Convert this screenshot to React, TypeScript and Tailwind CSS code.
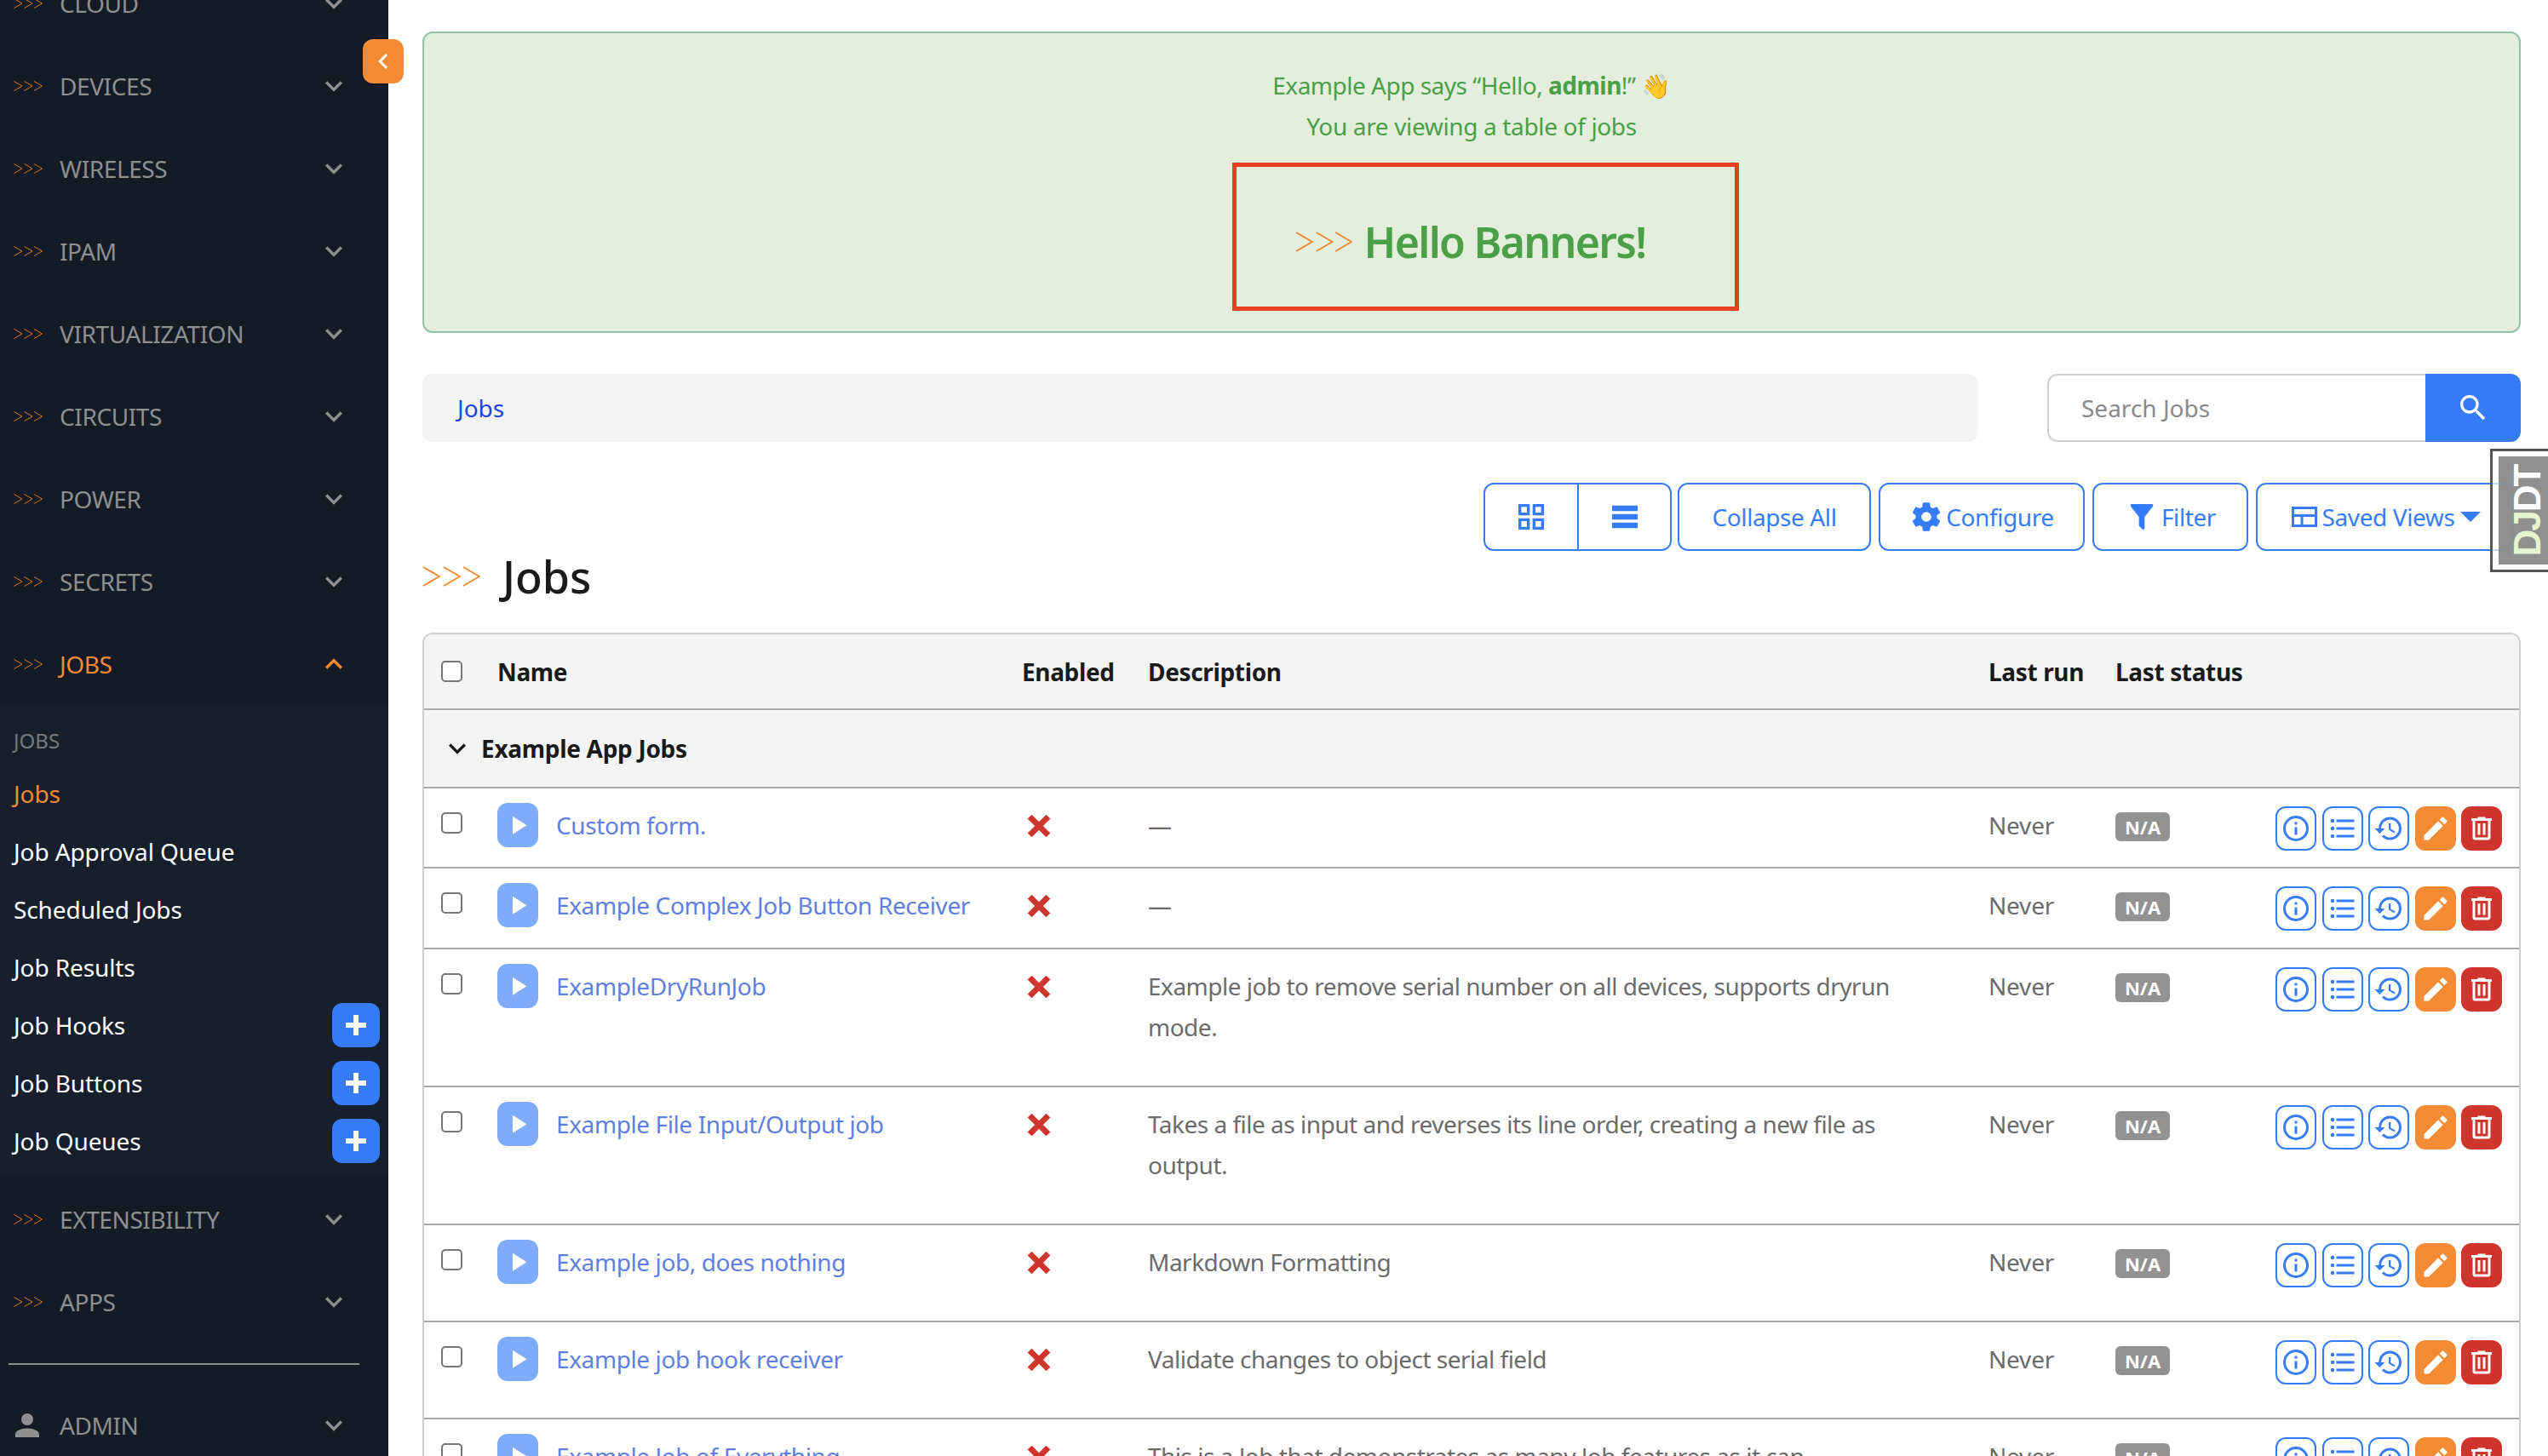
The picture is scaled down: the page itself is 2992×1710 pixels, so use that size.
import type { ReactNode } from "react";

const icons = {
  info: "M11,9H13V7H11M12,20C7.59,20 4,16.41 4,12C4,7.59 7.59,4 12,4C16.41,4 20,7.59 20,12C20,16.41 16.41,20 12,20M12,2A10,10 0 0,0 2,12A10,10 0 0,0 12,22A10,10 0 0,0 22,12A10,10 0 0,0 12,2M11,17H13V11H11V17Z",
  list: "M7,5H21V7H7V5M7,13V11H21V13H7M4,4.5A1.5,1.5 0 0,1 5.5,6A1.5,1.5 0 0,1 4,7.5A1.5,1.5 0 0,1 2.5,6A1.5,1.5 0 0,1 4,4.5M4,10.5A1.5,1.5 0 0,1 5.5,12A1.5,1.5 0 0,1 4,13.5A1.5,1.5 0 0,1 2.5,12A1.5,1.5 0 0,1 4,10.5M7,19V17H21V19H7M4,16.5A1.5,1.5 0 0,1 5.5,18A1.5,1.5 0 0,1 4,19.5A1.5,1.5 0 0,1 2.5,18A1.5,1.5 0 0,1 4,16.5Z",
  history: "M13.5,8H12V13L16.28,15.54L17,14.33L13.5,12.25V8M13,3A9,9 0 0,0 4,12H1L4.96,16.03L9,12H6A7,7 0 0,1 13,5A7,7 0 0,1 20,12A7,7 0 0,1 13,19C11.07,19 9.32,18.21 8.06,16.94L6.64,18.36C8.27,20 10.5,21 13,21A9,9 0 0,0 22,12A9,9 0 0,0 13,3",
  pencil: "M20.71,7.04C21.1,6.65 21.1,6 20.71,5.63L18.37,3.29C18,2.9 17.35,2.9 16.96,3.29L15.12,5.12L18.87,8.87M3,17.25V21H6.75L17.81,9.93L14.06,6.18L3,17.25Z",
  trash: "M9,3V4H4V6H5V19A2,2 0 0,0 7,21H17A2,2 0 0,0 19,19V6H20V4H15V3H9M7,6H17V19H7V6M9,8V17H11V8H9M13,8V17H15V8H13Z",
  grid: "M3,11H11V3H3M5,5H9V9H5M13,21H21V13H13M15,15H19V19H15M3,21H11V13H3M5,15H9V19H5M13,3V11H21V3M19,9H15V5H19Z",
  rows: "M3 4H21V8H3V4M3 10H21V14H3V10M3 16H21V20H3V16Z",
  cog: "M12,15.5A3.5,3.5 0 0,1 8.5,12A3.5,3.5 0 0,1 12,8.5A3.5,3.5 0 0,1 15.5,12A3.5,3.5 0 0,1 12,15.5M19.43,12.97C19.47,12.65 19.5,12.33 19.5,12C19.5,11.67 19.47,11.34 19.43,11L21.54,9.37C21.73,9.22 21.78,8.95 21.66,8.73L19.66,5.27C19.54,5.05 19.27,4.96 19.05,5.05L16.56,6.05C16.04,5.66 15.5,5.32 14.87,5.07L14.5,2.42C14.46,2.18 14.25,2 14,2H10C9.75,2 9.54,2.18 9.5,2.42L9.13,5.07C8.5,5.32 7.96,5.66 7.44,6.05L4.95,5.05C4.73,4.96 4.46,5.05 4.34,5.27L2.34,8.73C2.21,8.95 2.27,9.22 2.46,9.37L4.57,11C4.53,11.34 4.5,11.67 4.5,12C4.5,12.33 4.53,12.65 4.57,12.97L2.46,14.63C2.27,14.78 2.21,15.05 2.34,15.27L4.34,18.73C4.46,18.95 4.73,19.03 4.95,18.95L7.44,17.94C7.96,18.34 8.5,18.68 9.13,18.93L9.5,21.58C9.54,21.82 9.75,22 10,22H14C14.25,22 14.46,21.82 14.5,21.58L14.87,18.93C15.5,18.67 16.04,18.34 16.56,17.94L19.05,18.95C19.27,19.03 19.54,18.95 19.66,18.73L21.66,15.27C21.78,15.05 21.73,14.78 21.54,14.63L19.43,12.97Z",
  filter: "M14,12V19.88C14.04,20.18 13.94,20.5 13.71,20.71C13.32,21.1 12.69,21.1 12.3,20.71L10.29,18.7C10.06,18.47 9.96,18.16 10,17.87V12H9.97L4.21,4.62C3.87,4.19 3.95,3.56 4.38,3.22C4.57,3.08 4.78,3 5,3V3H19V3C19.22,3 19.43,3.08 19.62,3.22C20.05,3.56 20.13,4.19 19.79,4.62L14.03,12H14Z",
  table: "M2,4H22V20H2V4M4,6V10H20V6H4M4,12V18H9V12H4M11,12V18H20V12H11Z",
  magnify: "M9.5,3A6.5,6.5 0 0,1 16,9.5C16,11.11 15.41,12.59 14.44,13.73L14.71,14H15.5L20.5,19L19,20.5L14,15.5V14.71L13.73,14.44C12.59,15.41 11.11,16 9.5,16A6.5,6.5 0 0,1 3,9.5A6.5,6.5 0 0,1 9.5,3M9.5,5C7,5 5,7 5,9.5C5,12 7,14 9.5,14C12,14 14,12 14,9.5C14,7 12,5 9.5,5Z",
  account: "M12,4A4,4 0 0,1 16,8A4,4 0 0,1 12,12A4,4 0 0,1 8,8A4,4 0 0,1 12,4M12,14C16.42,14 20,15.79 20,18V20H4V18C4,15.79 7.58,14 12,14Z",
  play: "M8,5.14V19.14L19,12.14L8,5.14Z",
  plus: "M20 14H14V20H10V14H4V10H10V4H14V10H20V14Z",
  close: "M20 6.91L17.09 4L12 9.09L6.91 4L4 6.91L9.09 12L4 17.09L6.91 20L12 14.91L17.09 20L20 17.09L14.91 12L20 6.91Z",
  down: "M7.41,8.58L12,13.17L16.59,8.58L18,10L12,16L6,10L7.41,8.58Z",
  up: "M7.41,15.41L12,10.83L16.59,15.41L18,14L12,8L6,14L7.41,15.41Z",
  left: "M15.41,16.58L10.83,12L15.41,7.41L14,6L8,12L14,18L15.41,16.58Z",
};

const Icon = ({ name, className }: { name: keyof typeof icons; className: string }) => (
  <svg viewBox="0 0 24 24" fill="currentColor" className={className}>
    <path d={icons[name]} />
  </svg>
);

const Chevrons = ({ className }: { className: string }) => (
  <svg viewBox="0 0 68 24" fill="none" stroke="currentColor" strokeWidth="2" preserveAspectRatio="none" className={className}>
    <path d="M1 1L20 12L1 23M25 1L44 12L25 23M48 1L67 12L48 23" />
  </svg>
);

const NavItem = ({ label, open }: { label: string; open?: boolean }) => (
  <div className="flex items-center h-[97px]">
    <Chevrons className="w-[34px] h-[12px] ml-4 text-[#d97a26]" />
    <span className={`ml-[20px] flex-1 text-[28px] tracking-[-0.4px] ${open ? "text-[#f28b33]" : "text-[#8f8f8f]"}`}>{label}</span>
    <Icon name={open ? "up" : "down"} className={`w-10 h-10 mr-[44px] ${open ? "text-[#f28b33]" : "text-[#8f8f8f]"}`} />
  </div>
);

const SubItem = ({ label, active, add }: { label: string; active?: boolean; add?: boolean }) => (
  <div className="flex items-center justify-between h-[68px] pl-4 pr-[10px]">
    <span className={`text-[28px] tracking-[-0.1px] ${active ? "text-[#f28b33]" : "text-white"}`}>{label}</span>
    {add && (
      <span className="flex items-center justify-center w-[56px] h-[52px] rounded-xl bg-[#367cf7] text-white">
        <Icon name="plus" className="w-9 h-9" />
      </span>
    )}
  </div>
);

const Sidebar = () => (
  <aside className="relative w-[456px] shrink-0 -mt-[45px] mb-[-100px] bg-[#141b26]">
    {["CLOUD", "DEVICES", "WIRELESS", "IPAM", "VIRTUALIZATION", "CIRCUITS", "POWER", "SECRETS"].map((label) => (
      <NavItem key={label} label={label} />
    ))}
    <NavItem label="JOBS" open />
    <div className="bg-[#171f2c] h-[555px] pt-[14px]">
      <div className="h-[56px] pl-4 flex items-center text-[24px] text-[#77797e]">JOBS</div>
      <SubItem label="Jobs" active />
      <SubItem label="Job Approval Queue" />
      <SubItem label="Scheduled Jobs" />
      <SubItem label="Job Results" />
      <SubItem label="Job Hooks" add />
      <SubItem label="Job Buttons" add />
      <SubItem label="Job Queues" add />
    </div>
    <NavItem label="EXTENSIBILITY" />
    <NavItem label="APPS" />
    <div className="mt-[24px] ml-[10px] w-[412px] h-[2px] bg-[#8f8f8f]" />
    <div className="flex items-center h-[97px] mt-[22px]">
      <Icon name="account" className="w-[42px] h-[42px] ml-[11px] text-[#8f8f8f]" />
      <span className="ml-[17px] flex-1 text-[28px] tracking-[-0.4px] text-[#8f8f8f]">ADMIN</span>
      <Icon name="down" className="w-10 h-10 mr-[44px] text-[#8f8f8f]" />
    </div>
  </aside>
);

const Banner = () => (
  <div className="flex flex-col items-center h-[354px] pt-[37px] rounded-xl border-2 border-[#93c3a5] bg-[#e3efdc] text-[#4a9f47] tracking-[-0.35px]">
    <p className="leading-[48px] tracking-[-0.5px]">
      Example App says “Hello, <b className="font-bold">admin</b>!” 👋
    </p>
    <p className="leading-[48px]">You are viewing a table of jobs</p>
    <div className="flex items-center justify-center gap-[14px] mt-[19px] ml-[33px] pr-[36px] pt-[12px] w-[595px] h-[174px] border-[5px] border-[#e8401f]">
      <Chevrons className="w-[67px] h-[24px] text-[#f28b33]" />
      <span className="text-[50px] font-semibold tracking-[-1.7px]">Hello Banners!</span>
    </div>
  </div>
);

const SearchRow = () => (
  <div className="flex justify-between mt-[48px] h-[80px]">
    <div className="flex items-center w-[1827px] pl-[41px] rounded-xl bg-[#f4f4f4] text-[#1f45e0]">Jobs</div>
    <div className="flex w-[556px]">
      <div className="flex-1 flex items-center pl-[38px] rounded-l-xl border-2 border-r-0 border-[#cfcfcf] text-[#8a8a8a]">Search Jobs</div>
      <div className="flex items-center justify-center w-[112px] rounded-r-xl bg-[#367cf7] text-white">
        <Icon name="magnify" className="w-10 h-10" />
      </div>
    </div>
  </div>
);

const ToolButton = ({ w, children }: { w: string; children: ReactNode }) => (
  <div className={`flex items-center justify-center gap-[3px] h-[80px] rounded-xl border-2 border-[#367cf7] text-[#367cf7] tracking-[-0.4px] ${w}`}>{children}</div>
);

const Toolbar = () => (
  <div className="flex justify-end gap-[9px] mt-[48px] pr-[8px] h-[80px]">
    <div className="flex h-[80px] w-[221px] -mr-[2px] rounded-xl border-2 border-[#367cf7] text-[#367cf7]">
      <div className="flex items-center justify-center w-[110px] border-r-2 border-[#367cf7]">
        <Icon name="grid" className="w-10 h-10" />
      </div>
      <div className="flex items-center justify-center flex-1">
        <Icon name="rows" className="w-10 h-10" />
      </div>
    </div>
    <ToolButton w="w-[227px]">Collapse All</ToolButton>
    <ToolButton w="w-[242px]">
      <Icon name="cog" className="w-10 h-10" />
      Configure
    </ToolButton>
    <ToolButton w="w-[183px]">
      <Icon name="filter" className="w-10 h-10" />
      Filter
    </ToolButton>
    <ToolButton w="w-[303px]">
      <Icon name="table" className="w-9 h-9" />
      Saved Views
      <svg viewBox="0 0 24 12" fill="currentColor" className="ml-[4px] w-6 h-3">
        <path d="M0 0H24L12 12Z" />
      </svg>
    </ToolButton>
  </div>
);

const RowAction = ({ name, solid }: { name: keyof typeof icons; solid?: string }) => (
  <span className={`flex items-center justify-center w-[48px] h-[52px] rounded-xl ${solid ?? "border-2 border-[#367cf7] text-[#367cf7]"}`}>
    <Icon name={name} className="w-9 h-9" />
  </span>
);

const rows = [
  { name: "Custom form.", desc: "—", h: "h-[94px]" },
  { name: "Example Complex Job Button Receiver", desc: "—", h: "h-[95px]" },
  { name: "ExampleDryRunJob", desc: "Example job to remove serial number on all devices, supports dryrun mode.", h: "h-[162px]" },
  { name: "Example File Input/Output job", desc: "Takes a file as input and reverses its line order, creating a new file as output.", h: "h-[162px]" },
  { name: "Example job, does nothing", desc: "Markdown Formatting", h: "h-[114px]" },
  { name: "Example job hook receiver", desc: "Validate changes to object serial field", h: "h-[114px]" },
  { name: "Example Job of Everything", desc: "This is a Job that demonstrates as many Job features as it can.", h: "h-[114px]" },
];

const Checkbox = () => <span className="block w-[25px] h-[25px] rounded-[5px] border-2 border-[#767676] bg-white" />;

const JobsTable = () => (
  <div className="mt-[34px] rounded-t-xl border-x-2 border-t-2 border-[#cfcfcf] overflow-hidden">
    <table className="w-full table-fixed border-collapse">
      <colgroup>
        <col className="w-[86px]" />
        <col className="w-[616px]" />
        <col className="w-[148px]" />
        <col className="w-[987px]" />
        <col className="w-[149px]" />
        <col className="w-[180px]" />
        <col />
      </colgroup>
      <thead>
        <tr className="h-[88px] bg-[#f4f4f4] border-b-2 border-[#aaaaaa] text-left font-bold text-[#1a1a1a] tracking-[-0.35px]">
          <th className="pl-[20px]">
            <Checkbox />
          </th>
          <th className="font-bold">Name</th>
          <th className="font-bold">Enabled</th>
          <th className="font-bold">Description</th>
          <th className="font-bold">Last run</th>
          <th className="font-bold" colSpan={2}>Last status</th>
        </tr>
      </thead>
      <tbody>
        <tr className="h-[92px] bg-[#f4f4f4] border-b-2 border-[#aaaaaa]">
          <td colSpan={7} className="pl-[19px]">
            <span className="flex items-center gap-[8px] font-bold text-[#1a1a1a] tracking-[-0.3px]">
              <Icon name="down" className="w-10 h-10" />
              Example App Jobs
            </span>
          </td>
        </tr>
        {rows.map((row) => (
          <tr key={row.name} className={`${row.h} border-b-2 border-[#aaaaaa] align-top`}>
            <td className="pl-[20px] pt-[28px]">
              <Checkbox />
            </td>
            <td className="pt-[17px]">
              <div className="flex items-center gap-[21px] h-[52px]">
                <span className="flex items-center justify-center w-[48px] h-[52px] rounded-xl bg-[#7fabfb] text-white shrink-0">
                  <Icon name="play" className="w-9 h-9" />
                </span>
                <span className="text-[#5f7fe0] tracking-[-0.4px]">{row.name}</span>
              </div>
            </td>
            <td className="pt-[24px]">
              <Icon name="close" className="w-10 h-10 text-[#cf352c]" />
            </td>
            <td className="pt-[19px] pr-[40px] text-[#6b6b6b] tracking-[-0.5px]">{row.desc}</td>
            <td className="pt-[19px] text-[#6b6b6b] tracking-[-0.2px]">Never</td>
            <td className="pt-[28px]">
              <span className="flex items-center justify-center w-[64px] h-[34px] rounded-md bg-[#929292] text-white text-[22px] font-bold">N/A</span>
            </td>
            <td className="pt-[21px]">
              <div className="flex justify-end gap-[6.5px] pr-[20px]">
                <RowAction name="info" />
                <RowAction name="list" />
                <RowAction name="history" />
                <RowAction name="pencil" solid="bg-[#f28b33] text-white" />
                <RowAction name="trash" solid="bg-[#cf352c] text-white" />
              </div>
            </td>
          </tr>
        ))}
      </tbody>
    </table>
  </div>
);

const App = () => (
  <div className="relative flex h-[1710px] w-[2992px] overflow-hidden bg-white font-['Noto_Sans',sans-serif] text-[28px] leading-[48px]">
    <Sidebar />
    <button className="absolute left-[426px] top-[46px] flex items-center justify-center w-[48px] h-[52px] rounded-xl bg-[#f28b33] text-white">
      <Icon name="left" className="w-9 h-9" />
    </button>
    <main className="flex-1 pl-[40px] pr-[32px] pt-[37px] min-w-0">
      <Banner />
      <SearchRow />
      <Toolbar />
      <div className="flex items-center -mt-[2px] h-[64px] gap-[26px]">
        <Chevrons className="w-[68px] h-[24px] text-[#f28b33]" />
        <h1 className="text-[52px] font-medium text-[#1a1a1a]">Jobs</h1>
      </div>
      <JobsTable />
    </main>
    <div className="absolute right-0 top-[527px] w-[68px] h-[145px] border-[3px] border-r-0 border-[#555555] bg-white/70 pl-[7px] pt-[6px] pb-[6px]">
      <div className="flex items-center justify-center h-full bg-[#8a8a8a]/95">
        <span className="ml-[10px] -rotate-90 whitespace-nowrap font-['Liberation_Sans',sans-serif] font-bold text-[44px] tracking-[-2px] leading-none text-white">
          <span className="text-[#e6f5d0]">DJ</span>DT
        </span>
      </div>
    </div>
  </div>
);

export default App;
